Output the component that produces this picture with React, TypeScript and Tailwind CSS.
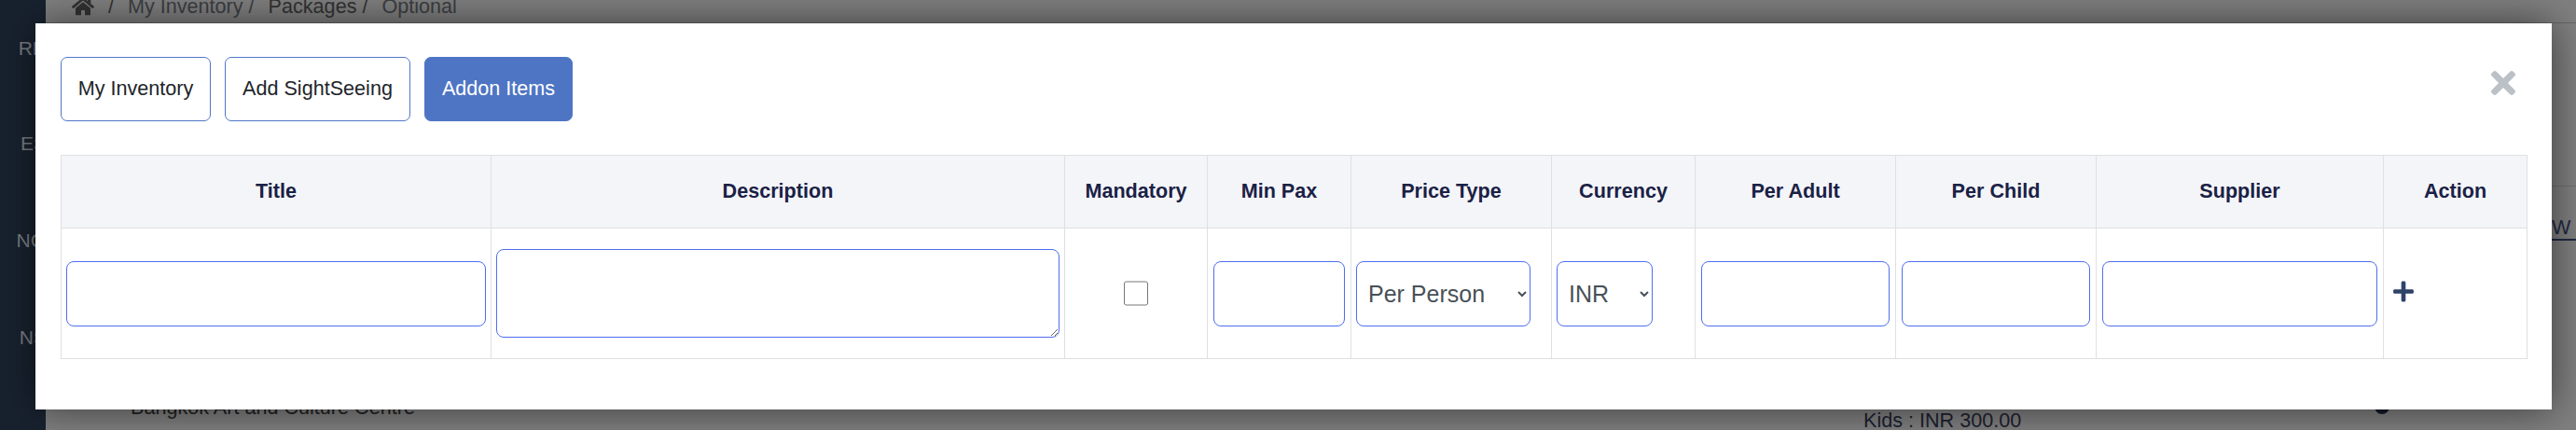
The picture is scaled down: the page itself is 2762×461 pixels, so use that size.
import { FaHome, FaPlus, FaTimes } from "react-icons/fa";

const columns = [
  { label: "Title", width: "w-[461px]" },
  { label: "Description", width: "w-[615px]" },
  { label: "Mandatory", width: "w-[153px]" },
  { label: "Min Pax", width: "w-[154px]" },
  { label: "Price Type", width: "w-[215px]" },
  { label: "Currency", width: "w-[154px]" },
  { label: "Per Adult", width: "w-[215px]" },
  { label: "Per Child", width: "w-[215px]" },
  { label: "Supplier", width: "w-[308px]" },
  { label: "Action", width: "w-[154px]" },
];

const fieldClass =
  "block h-[70px] w-full rounded-[8px] border border-[#4f6ef0] bg-white px-2 text-[25px] text-[#495057] outline-none";

// page behind the modal, mostly hidden by it
function BackgroundPage() {
  return (
    <div className="flex h-full w-full">
      <aside className="flex w-[49px] shrink-0 flex-col items-end bg-[#18222f] pt-[40px] text-[21px] leading-[24px] text-[#7c7f84]">
        <span className="mr-[-1px] mb-[78px]">RD</span>
        <span className="mr-[-1px] mb-[80px]">ES</span>
        <span className="mb-[80px]">NG</span>
        <span className="mr-[-1px]">NS</span>
      </aside>
      <main className="flex min-w-0 flex-1 flex-col bg-[#808080]">
        <div className="mt-[-10px] flex h-[35px] items-center gap-[15px] border-b border-[#666] pl-[28px] text-[21.6px] text-[#333]">
          <FaHome className="h-[22px] w-[24px]" />
          <span>/</span>
          <span className="text-[#3c3f44]">My Inventory /</span>
          <span>Packages /</span>
          <span className="text-[#3c3f44]">Optional</span>
        </div>
      </main>
    </div>
  );
}

export default function App() {
  return (
    <div className="relative h-[461px] w-[2762px] overflow-hidden font-['Liberation_Sans',Arial,sans-serif]">
      <BackgroundPage />

      {/* Table rows peeking out under the modal */}
      <div className="absolute top-[439px] left-[140px] mt-[-18px] text-[21.6px] text-[#222]">
        Bangkok Art and Culture Centre
      </div>
      <div className="absolute top-[440px] left-[1998px] text-[21.6px] leading-[21px] text-[#1c2130]">
        Kids : INR 300.00
      </div>
      <div className="absolute top-[199px] right-0 h-px w-[26px] bg-[#6f6f6f]" />
      <div className="absolute top-[232px] right-0 w-[26px] border-b-2 border-[#1f2a44] pl-0 text-[21.6px] leading-[24px] text-[#1f2a44]">
        W
      </div>
      <div className="absolute top-[428px] left-[2546px] h-[16px] w-[16px] rounded-full bg-[#141a2b]" />

      {/* Modal */}
      <div className="absolute top-[25px] left-[38px] h-[414px] w-[2698px] bg-white px-[27px] pt-[36px] shadow-[0_0_40px_rgba(0,0,0,0.55)]">
        <div className="mb-[36px] flex gap-[15px]">
          <button className="h-[69px] w-[161px] rounded-[7px] border border-[#4f76c6] bg-white text-[21.6px] text-[#212529]">
            My Inventory
          </button>
          <button className="h-[69px] w-[199px] rounded-[7px] border border-[#4f76c6] bg-white text-[21.6px] text-[#212529]">
            Add SightSeeing
          </button>
          <button className="h-[69px] w-[159px] rounded-[7px] border border-[#4f76c6] bg-[#4e75c4] text-[21.6px] text-white">
            Addon Items
          </button>
        </div>

        <FaTimes className="absolute top-[45px] right-[39px] h-[38px] w-[26px] text-[#bcc0c7]" />

        <table className="w-[2644px] table-fixed border-collapse border border-[#dfe0e2]">
          <thead>
            <tr className="h-[78px] bg-[#f4f5f9]">
              {columns.map((col) => (
                <th
                  key={col.label}
                  className={`${col.width} border border-[#dfe0e2] text-center text-[21.6px] font-bold text-[#1a2145]`}
                >
                  {col.label}
                </th>
              ))}
            </tr>
          </thead>
          <tbody>
            <tr className="h-[140px]">
              <td className="border border-[#dfe0e2] px-[5px]">
                <input className={fieldClass} />
              </td>
              <td className="border border-[#dfe0e2] px-[5px]">
                <textarea className="block h-[95px] w-full rounded-[8px] border border-[#4f6ef0] bg-white outline-none" />
              </td>
              <td className="border border-[#dfe0e2] text-center">
                <input type="checkbox" className="inline-block h-[27px] w-[26px] align-middle" />
              </td>
              <td className="border border-[#dfe0e2] px-[6px]">
                <input className={fieldClass} />
              </td>
              <td className="border border-[#dfe0e2] pr-[22px] pl-[5px]">
                <select className={fieldClass}>
                  <option>Per Person</option>
                </select>
              </td>
              <td className="border border-[#dfe0e2] pr-[45px] pl-[5px]">
                <select className={fieldClass}>
                  <option>INR</option>
                </select>
              </td>
              <td className="border border-[#dfe0e2] px-[6px]">
                <input className={fieldClass} />
              </td>
              <td className="border border-[#dfe0e2] px-[6px]">
                <input className={fieldClass} />
              </td>
              <td className="border border-[#dfe0e2] px-[6px]">
                <input className={fieldClass} />
              </td>
              <td className="border border-[#dfe0e2] pl-[10px]">
                <FaPlus className="mt-[-5px] h-[25px] w-[22px] text-[#2f4268]" />
              </td>
            </tr>
          </tbody>
        </table>
      </div>
    </div>
  );
}
